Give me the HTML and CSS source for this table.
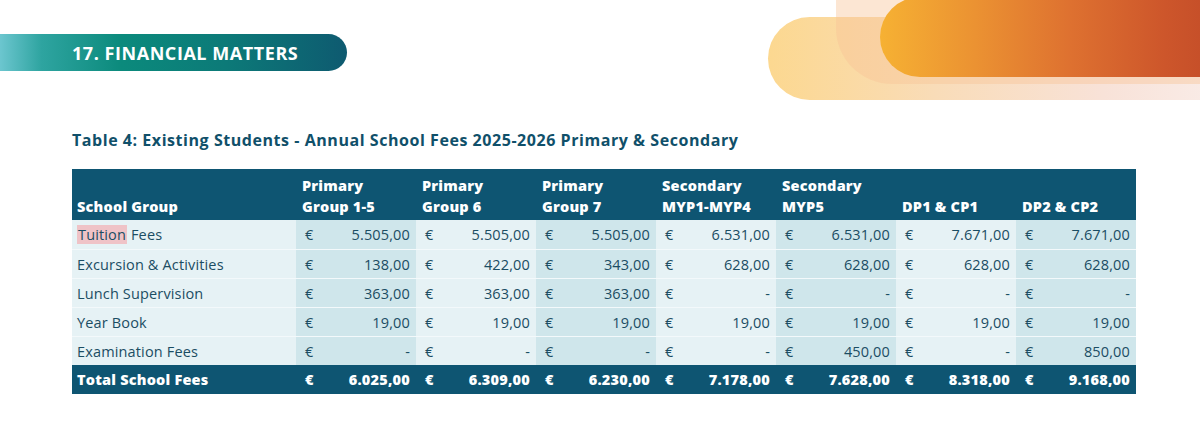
FILE: index.html
```html
<!DOCTYPE html>
<html lang="en">
<head>
<meta charset="utf-8">
<title>17. Financial Matters</title>
<link rel="stylesheet" href="styles.css">
</head>
<body>
<div class="deco" aria-hidden="true">
  <div class="pill pill-a"></div>
  <div class="pill pill-b"></div>
  <div class="pill pill-c"></div>
</div>
<header class="banner"><h1>17. FINANCIAL MATTERS</h1></header>
<main class="content">
  <h2 class="caption">Table 4: Existing Students - Annual School Fees 2025-2026 Primary &amp; Secondary</h2>
  <table class="fees">
    <colgroup>
      <col class="c-label">
      <col class="c-val"><col class="c-val"><col class="c-val"><col class="c-val"><col class="c-val"><col class="c-val"><col class="c-val">
    </colgroup>
    <thead>
      <tr>
        <th>School Group</th>
        <th>Primary<br>Group 1-5</th>
        <th>Primary<br>Group 6</th>
        <th>Primary<br>Group 7</th>
        <th>Secondary<br>MYP1-MYP4</th>
        <th>Secondary<br>MYP5</th>
        <th>DP1 &amp; CP1</th>
        <th>DP2 &amp; CP2</th>
      </tr>
    </thead>
    <tbody>
      <tr>
        <td class="label"><span class="hl">Tuition</span> Fees</td>
        <td><div class="m"><span>€</span><span>5.505,00</span></div></td>
        <td><div class="m"><span>€</span><span>5.505,00</span></div></td>
        <td><div class="m"><span>€</span><span>5.505,00</span></div></td>
        <td><div class="m"><span>€</span><span>6.531,00</span></div></td>
        <td><div class="m"><span>€</span><span>6.531,00</span></div></td>
        <td><div class="m"><span>€</span><span>7.671,00</span></div></td>
        <td><div class="m"><span>€</span><span>7.671,00</span></div></td>
      </tr>
      <tr>
        <td class="label">Excursion &amp; Activities</td>
        <td><div class="m"><span>€</span><span>138,00</span></div></td>
        <td><div class="m"><span>€</span><span>422,00</span></div></td>
        <td><div class="m"><span>€</span><span>343,00</span></div></td>
        <td><div class="m"><span>€</span><span>628,00</span></div></td>
        <td><div class="m"><span>€</span><span>628,00</span></div></td>
        <td><div class="m"><span>€</span><span>628,00</span></div></td>
        <td><div class="m"><span>€</span><span>628,00</span></div></td>
      </tr>
      <tr>
        <td class="label">Lunch Supervision</td>
        <td><div class="m"><span>€</span><span>363,00</span></div></td>
        <td><div class="m"><span>€</span><span>363,00</span></div></td>
        <td><div class="m"><span>€</span><span>363,00</span></div></td>
        <td><div class="m"><span>€</span><span>-</span></div></td>
        <td><div class="m"><span>€</span><span>-</span></div></td>
        <td><div class="m"><span>€</span><span>-</span></div></td>
        <td><div class="m"><span>€</span><span>-</span></div></td>
      </tr>
      <tr>
        <td class="label">Year Book</td>
        <td><div class="m"><span>€</span><span>19,00</span></div></td>
        <td><div class="m"><span>€</span><span>19,00</span></div></td>
        <td><div class="m"><span>€</span><span>19,00</span></div></td>
        <td><div class="m"><span>€</span><span>19,00</span></div></td>
        <td><div class="m"><span>€</span><span>19,00</span></div></td>
        <td><div class="m"><span>€</span><span>19,00</span></div></td>
        <td><div class="m"><span>€</span><span>19,00</span></div></td>
      </tr>
      <tr>
        <td class="label">Examination Fees</td>
        <td><div class="m"><span>€</span><span>-</span></div></td>
        <td><div class="m"><span>€</span><span>-</span></div></td>
        <td><div class="m"><span>€</span><span>-</span></div></td>
        <td><div class="m"><span>€</span><span>-</span></div></td>
        <td><div class="m"><span>€</span><span>450,00</span></div></td>
        <td><div class="m"><span>€</span><span>-</span></div></td>
        <td><div class="m"><span>€</span><span>850,00</span></div></td>
      </tr>
    </tbody>
    <tfoot>
      <tr>
        <td class="label">Total School Fees</td>
        <td><div class="m"><span>€</span><span>6.025,00</span></div></td>
        <td><div class="m"><span>€</span><span>6.309,00</span></div></td>
        <td><div class="m"><span>€</span><span>6.230,00</span></div></td>
        <td><div class="m"><span>€</span><span>7.178,00</span></div></td>
        <td><div class="m"><span>€</span><span>7.628,00</span></div></td>
        <td><div class="m"><span>€</span><span>8.318,00</span></div></td>
        <td><div class="m"><span>€</span><span>9.168,00</span></div></td>
      </tr>
    </tfoot>
  </table>
</main>
</body>
</html>
```

FILE: styles.css
```css
* { box-sizing: border-box; }
html, body { margin: 0; padding: 0; }
body {
  position: relative;
  width: 1200px;
  height: 436px;
  overflow: hidden;
  background: #ffffff;
  font-family: "Open Sans", "DejaVu Sans", sans-serif;
  color: #1b4d63;
}

/* decorative pills top right */
.deco { position: absolute; inset: 0; pointer-events: none; }
.pill { position: absolute; }
.pill-a {
  left: 768px; top: 17px; width: 480px; height: 83px;
  border-radius: 42px;
  background: linear-gradient(90deg, #fcd890 0%, #f9dcb8 35%, #f8e2d8 70%, #faefec 100%);
}
.pill-b {
  left: 836px; top: -60px; width: 420px; height: 144px;
  border-radius: 56px;
  background: rgba(248, 196, 150, 0.42);
}
.pill-c {
  left: 880px; top: -3px; width: 380px; height: 80px;
  border-radius: 40px;
  background: linear-gradient(90deg, #f6b133 0%, #eb9232 25%, #de7130 50%, #cd562b 75%, #bb4526 100%);
}

/* section banner */
.banner {
  position: relative;
  margin-top: 34px;
  width: 347px;
  height: 37px;
  border-radius: 0 19px 19px 0;
  background: linear-gradient(90deg, #6cc6cf 0%, #2ea4a0 12%, #0b8a7c 35%, #0c7a78 65%, #0e5a70 100%);
  display: flex;
  align-items: center;
}
.banner h1 {
  margin: 0;
  padding-left: 72px;
  font-size: 18px;
  font-weight: 700;
  color: #ffffff;
  letter-spacing: 0.55px;
}

.content { padding-left: 72px; }
.caption {
  margin: 58px 0 0 0;
  font-size: 16px;
  font-weight: 700;
  color: #10506a;
  line-height: 22px;
  letter-spacing: 0.55px;
}

.fees {
  margin-top: 18px;
  width: 1064px;
  border-collapse: collapse;
  table-layout: fixed;
  font-size: 14.5px;
  letter-spacing: 0.15px;
}
.c-label { width: 224px; }
.c-val { width: 120px; }

.fees thead th {
  background: #0e5572;
  color: #ffffff;
  text-align: left;
  vertical-align: bottom;
  font-weight: 800;
  font-size: 14.5px;
  line-height: 21px;
  letter-spacing: 0.2px;
  height: 51px;
  padding: 4px 6px 3px 6px;
}
.fees thead th:first-child { padding-left: 5px; }

.fees tbody td {
  height: 29px;
  padding: 1px 6px 0 9px;
  border-top: 1px solid #f3f9fb;
  background: #e6f2f5;
  color: #1b4d63;
  vertical-align: middle;
}
.fees tbody td:nth-child(even) { background: #cfe6eb; }
.fees tbody tr:first-child td { border-top: none; }
.fees tbody td.label { padding-left: 5px; background: #e6f2f5; }

.hl { background: #efc3c7; padding: 0 1px; }

.m { display: flex; justify-content: space-between; }

.fees tfoot td {
  height: 29px;
  background: #0e5572;
  color: #ffffff;
  font-weight: 800;
  letter-spacing: 0.2px;
  padding: 0 6px 0 9px;
  vertical-align: middle;
}
.fees tfoot td.label { padding-left: 5px; }
```
